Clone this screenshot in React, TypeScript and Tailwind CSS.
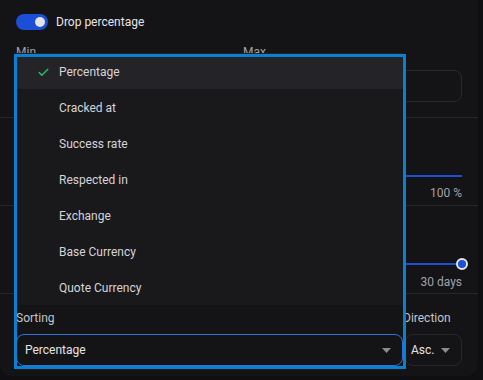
import { Check } from 'lucide-react';

const sortOptions = [
  'Percentage',
  'Cracked at',
  'Success rate',
  'Respected in',
  'Exchange',
  'Base Currency',
  'Quote Currency',
];

function Caret() {
  return (
    <svg width="9" height="5" viewBox="0 0 9 5" className="shrink-0">
      <path d="M0 0 L9 0 L4.5 5 Z" fill="#8b8b92" />
    </svg>
  );
}

export default function App() {
  const selected = 'Percentage';

  return (
    <div className="w-[483px] h-[380px] bg-[#0f0f11] font-['Roboto',sans-serif] text-xs text-[#d4d4d8]">
      <div className="relative w-[478px] h-[376px] bg-[#141416] rounded-b-xl">
        {/* Toggle + min/max */}
        <div className="h-[118px] px-4 pt-[14px] border-b border-[#27272a]">
          <div className="flex items-center gap-2 h-4">
            <div className="w-8 h-4 rounded-full bg-[#1d4ed8] flex items-center justify-end pr-[3px]">
              <div className="w-[10px] h-[10px] rounded-full bg-[#e4e4e7]" />
            </div>
            <span className="text-[#e4e4e7]">Drop percentage</span>
          </div>
          <div className="grid grid-cols-2 gap-2 mt-[14px]">
            <div>
              <div className="h-4 leading-4 text-[#a1a1aa] mb-[10px]">Min</div>
              <div className="h-8 rounded-lg border border-[#2a2a2e]" />
            </div>
            <div>
              <div className="h-4 leading-4 text-[#a1a1aa] mb-[10px]">Max</div>
              <div className="h-8 rounded-lg border border-[#2a2a2e]" />
            </div>
          </div>
        </div>

        {/* Percentage slider */}
        <div className="h-[88px] px-4 pb-1 flex flex-col justify-end border-b border-[#27272a]">
          <div className="h-[10px] flex items-center mb-1">
            <div className="w-full h-[2px] bg-[#1d4ed8]" />
          </div>
          <div className="h-4 leading-4 text-right text-[#a1a1aa]">100 %</div>
        </div>

        {/* Age slider */}
        <div className="h-[88px] px-4 pb-[3px] flex flex-col justify-end border-b border-[#27272a]">
          <div className="h-3 flex items-center mb-1 relative">
            <div className="flex-1 h-[2px] bg-[#1d4ed8]" />
            <div className="w-3 h-3 rounded-full bg-[#1d4ed8] border-2 border-[#e4e4e7] -mr-[6px] ml-[-6px]" />
          </div>
          <div className="h-4 leading-4 text-right text-[#a1a1aa]">30 days</div>
        </div>

        {/* Sorting */}
        <div className="px-4 pt-[16px]">
          <div className="flex gap-[2px]">
            <div className="flex-1">
              <div className="h-4 leading-4 text-[#c4c4c8] mb-[8px]">Sorting</div>
              <div className="h-8 rounded-lg border border-[#2f6fd6] flex items-center justify-between pl-2 pr-[11px] text-[#e4e4e7]">
                <span>{selected}</span>
                <Caret />
              </div>
            </div>
            <div className="w-[57px]">
              <div className="h-4 leading-4 text-[#c4c4c8] mb-[8px] -ml-[2px] whitespace-nowrap">Direction</div>
              <div className="h-8 rounded-lg border border-[#27272a] flex items-center gap-[7px] pl-[5px] text-[#e4e4e7]">
                <span>Asc.</span>
                <Caret />
              </div>
            </div>
          </div>
        </div>

        {/* Open sort menu */}
        <div className="absolute left-[17px] top-[53px] w-[386px] bg-[#19191c]">
          {sortOptions.map(option => (
            <div
              key={option}
              className={`h-9 flex items-center pl-5 pt-[2px] ${option === selected ? 'bg-[#242428]' : ''}`}
            >
              <span className="w-[14px] flex items-center">
                {option === selected && <Check size={13} strokeWidth={2.5} color="#22c55e" />}
              </span>
              <span className="ml-2 text-[#d4d4d8]">{option}</span>
            </div>
          ))}
        </div>

        {/* Focus outline */}
        <div className="absolute left-[14px] top-[54px] w-[392px] h-[315px] border-[3px] border-[#0a80d0] pointer-events-none" />
      </div>
    </div>
  );
}
